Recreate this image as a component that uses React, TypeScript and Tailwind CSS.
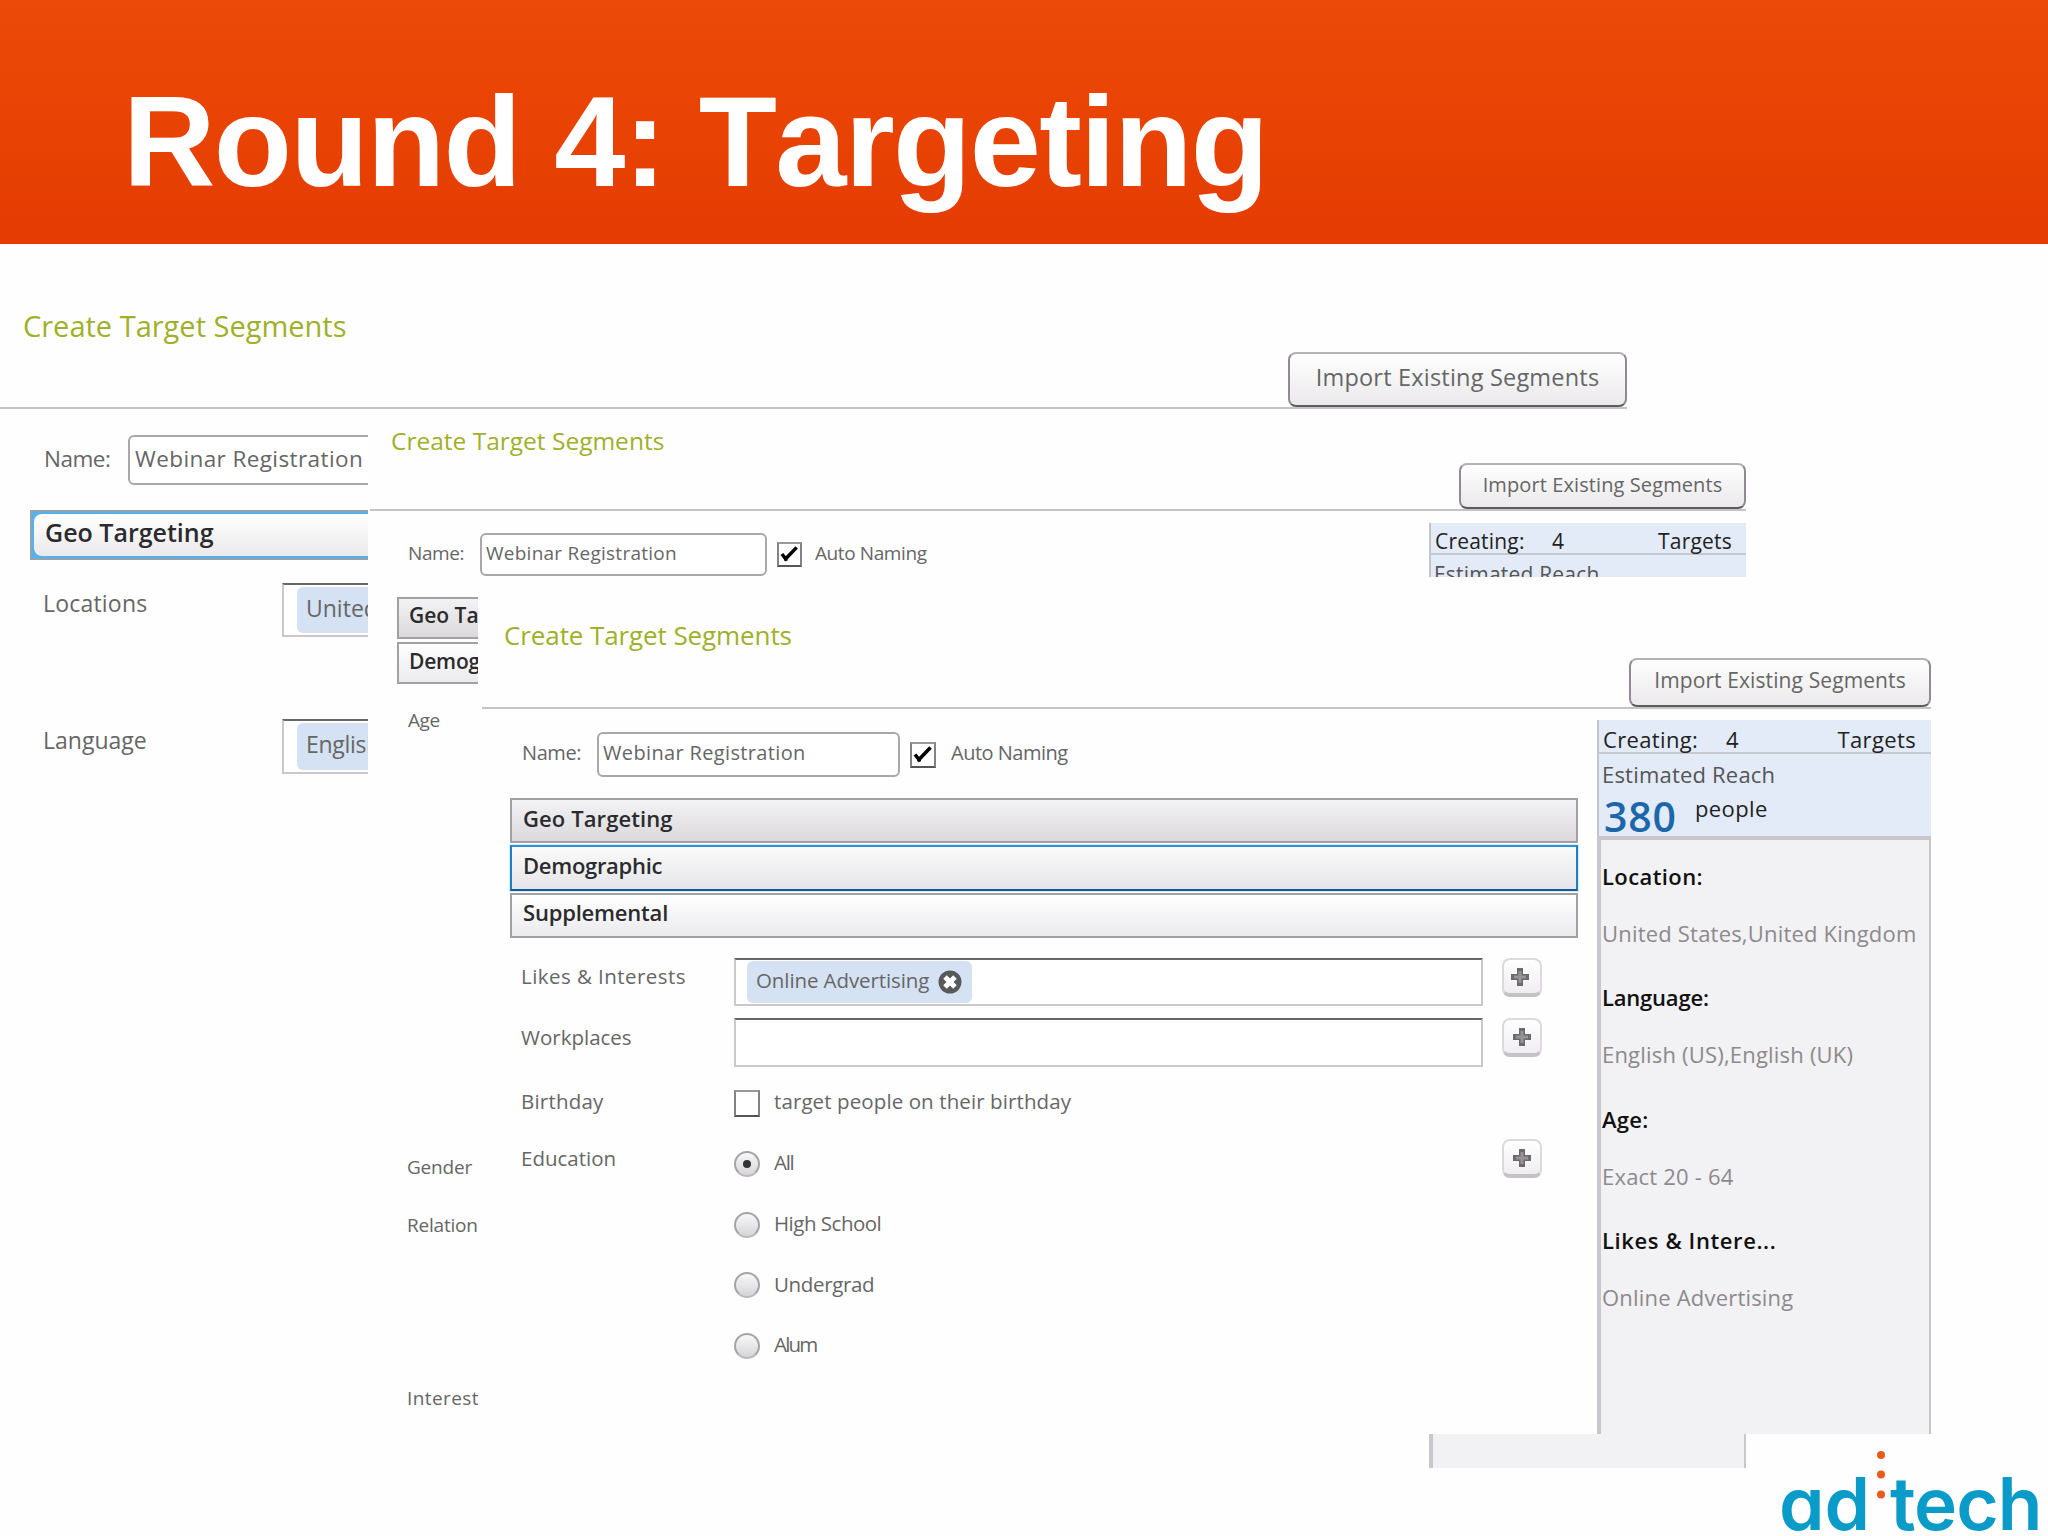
import clsx from "clsx"
import type { ReactNode } from "react"

function ImportButton({ className }: { className?: string }) {
    return (
        <button className={clsx("shrink-0 self-end rounded-lg border-2 border-t-[#b5b1b5] border-x-[#8f8b90] border-b-[#5f5a60] bg-linear-to-b from-white to-[#ebe9eb] leading-none text-[#666]", className)}>
            Import Existing Segments
        </button>
    )
}

function NameInput({ className }: { className?: string }) {
    return (
        <div className={clsx("flex shrink-0 items-center rounded-md border-2 border-[#aaa7ab] bg-white pl-1 leading-none", className)}>
            Webinar Registration
        </div>
    )
}

function Checkbox({ checked, className }: { checked?: boolean; className?: string }) {
    return (
        <span className={clsx("shrink-0 border-2 border-t-[#9a979b] border-x-[#858286] border-b-[#555] bg-white", className)}>
            {checked && (
                <svg viewBox="0 0 22 22" className="h-full w-full" fill="none" stroke="#000" strokeWidth="3.6">
                    <path d="M3 10.5 7 15.5 18.5 3.5" />
                    <path d="M4.5 13h4.5v4.5H5.5z" fill="#000" stroke="none" />
                </svg>
            )}
        </span>
    )
}

function Radio({ checked }: { checked?: boolean }) {
    return (
        <span className="flex size-[26px] shrink-0 items-center justify-center rounded-full border-2 border-[#a5a3a6] border-b-[#bbb9bc] bg-linear-to-b from-[#f8f8f8] to-[#d6d4d8]">
            {checked && <span className="size-2 rounded-full bg-[#333]" />}
        </span>
    )
}

function PlusButton({ className }: { className?: string }) {
    return (
        <button className={clsx("ml-[19px] flex h-[39px] w-10 shrink-0 items-center justify-center rounded-lg border-2 border-b-4 border-[#dcdadd] border-b-[#c4c2c6] bg-linear-to-b from-white to-[#efedf0]", className)}>
            <svg viewBox="0 0 18 18" className="size-[18px]">
                <path d="M6 0h6v6h6v6h-6v6H6v-6H0V6h6z" fill="#6c6a6d" />
                <path d="M7.5 3h3v4.5H15v3h-4.5V15h-3v-4.5H3v-3h4.5z" fill="#969497" />
            </svg>
        </button>
    )
}

function Bar({ children, className }: { children: ReactNode; className?: string }) {
    return (
        <div className={clsx("flex items-center border-2 leading-none font-semibold text-[#2b2b2e]", className)}>
            {children}
        </div>
    )
}

function TokenBox({ children, className }: { children?: ReactNode; className?: string }) {
    return (
        <div className={clsx("shrink-0 border-2 border-[#cac8cc] border-t-[#69656b] bg-white pl-[11px]", className)}>
            {children}
        </div>
    )
}

function GeoPanel() {
    return (
        <section className="absolute top-[244px] left-0 w-[1627px] text-[23px]">
            <header className="flex h-[165px] justify-between border-b-2 border-[#c6c3c7]">
                <h2 className="pt-[67px] pl-[23px] text-[29px] leading-none text-[#9fb02a]">Create Target Segments</h2>
                <ImportButton className="h-[55px] w-[339px] pb-1 text-[23.5px] tracking-[0.2px]" />
            </header>
            <div className="w-[368px] overflow-hidden pt-[26px] text-[#666]">
                <div className="flex h-[50px] items-center text-[22.5px]">
                    <span className="w-[128px] shrink-0 pb-[2px] pl-[44px] leading-none tracking-[-0.5px]">Name:</span>
                    <NameInput className="h-[50px] w-[330px] pb-[2px] pl-[5px] tracking-[0.4px]" />
                </div>
                <Bar className="mt-[25px] ml-[30px] h-[50px] w-[900px] border-[#8fa3b3] bg-[#58b1e8] p-[2px] text-[25px]">
                    <span className="flex h-full w-full items-center rounded-lg bg-linear-to-b from-white to-[#ebe9eb] pb-[5px] pl-[11px]">Geo Targeting</span>
                </Bar>
                <div className="mt-[23px] flex">
                    <span className="w-[282px] shrink-0 pt-[9px] pl-[43px] leading-none tracking-[0.2px]">Locations</span>
                    <TokenBox className="h-[54px] w-[500px]">
                        <span className="mt-[2px] ml-[2px] flex h-[46px] w-[190px] items-center rounded-md bg-[#d5e2f3] pb-1 pl-[9px] leading-none">United States</span>
                    </TokenBox>
                </div>
                <div className="mt-[82px] flex">
                    <span className="w-[282px] shrink-0 pt-[10px] pl-[43px] leading-none">Language</span>
                    <TokenBox className="h-[55px] w-[500px]">
                        <span className="mt-[2px] ml-[2px] flex h-[47px] w-[190px] items-center rounded-md bg-[#d5e2f3] pb-1 pl-[9px] leading-none tracking-[-0.3px]">English (US)</span>
                    </TokenBox>
                </div>
            </div>
        </section>
    )
}

function DemographicPanel() {
    return (
        <section className="absolute top-[411px] left-[368px] flex h-[1057px] w-[1378px] flex-col bg-[#fefefe] text-[19px]">
            <header className="ml-[2px] flex h-[100px] shrink-0 justify-between border-b-2 border-[#c6c3c7]">
                <h2 className="pt-[18px] pl-[21px] text-[24.5px] leading-none text-[#9fb02a]">Create Target Segments</h2>
                <ImportButton className="h-[46px] w-[287px] pb-[3px] text-[20px] tracking-[0.1px]" />
            </header>
            <div className="flex flex-1 justify-between">
                <div className="text-[#666]">
                    <div className="mt-[22px] flex h-[43px] items-center">
                        <span className="w-[112px] pb-[3px] pl-10 leading-none tracking-[-0.4px]">Name:</span>
                        <NameInput className="h-[43px] w-[287px] pb-[3px] tracking-[0.25px]" />
                        <Checkbox checked className="ml-[10px] size-[25px]" />
                        <span className="pb-[3px] pl-[13px] leading-none tracking-[-0.4px]">Auto Naming</span>
                    </div>
                    <div className="mt-[21px] ml-[29px] w-[81px] overflow-hidden text-[21px] whitespace-nowrap">
                        <Bar className="h-[42px] w-[900px] border-[#a3a0a4] bg-linear-to-b from-[#f3f2f4] to-[#dbd9dc] pb-[5px] pl-[10px]">Geo Targeting</Bar>
                        <Bar className="mt-[3px] h-[42px] w-[900px] border-[#a3a0a4] bg-linear-to-b from-white to-[#ebeaed] pb-1 pl-[10px] tracking-[-0.2px]">Demographic</Bar>
                    </div>
                    <p className="mt-[27px] ml-10 leading-none tracking-[-0.4px]">Age</p>
                    <p className="mt-[428px] ml-[39px] leading-none tracking-[-0.2px]">Gender</p>
                    <p className="mt-[39px] ml-[39px] leading-none tracking-[-0.2px]">Relation</p>
                    <p className="mt-[154px] ml-[39px] leading-none tracking-[0.4px]">Interest</p>
                </div>
                <aside className="mt-3 flex w-[317px] flex-col text-[21px] tracking-[0.2px]">
                    <div className="h-[116px] border-l-2 border-[#c5c5cc] bg-[#e2ebf7] leading-none">
                        <div className="flex h-8 border-b-2 border-[#c5c8d0] pt-2 pr-[14px] pl-1 text-[#222]">
                            <span className="w-[117px]">Creating:</span>
                            <span>4</span>
                            <span className="ml-auto">Targets</span>
                        </div>
                        <p className="pt-[9px] pl-[3px] text-[#555]">Estimated Reach</p>
                    </div>
                    <div className="flex-1 border-r-2 border-l-4 border-[#c9c7cb] bg-[#f2f1f3]" />
                </aside>
            </div>
        </section>
    )
}

const levels = [
    { name: "All", style: "tracking-[-1.3px]" },
    { name: "High School", style: "tracking-[-0.5px]" },
    { name: "Undergrad", style: "tracking-[-0.35px]" },
    { name: "Alum", style: "tracking-[-1.8px]" },
]

const summary = [
    { title: "Location:", value: "United States,United Kingdom", style: "tracking-[0.4px]" },
    { title: "Language:", value: "English (US),English (UK)", style: "tracking-[-0.2px]" },
    { title: "Age:", value: "Exact 20 - 64", style: "tracking-[0.3px]" },
    { title: "Likes & Intere...", value: "Online Advertising", style: "tracking-[0.6px]" },
]

function SupplementalPanel() {
    return (
        <section className="absolute top-[577px] left-[478px] flex h-[857px] w-[1453px] flex-col bg-[#fefefe] text-[20.5px]">
            <header className="ml-1 flex h-[132px] shrink-0 justify-between border-b-2 border-[#c6c3c7]">
                <h2 className="pt-[45px] pl-[22px] text-[26px] leading-none tracking-[-0.1px] text-[#9fb02a]">Create Target Segments</h2>
                <ImportButton className="h-[49px] w-[302px] pb-1 text-[21px] tracking-[0.1px]" />
            </header>
            <div className="flex flex-1 justify-between">
                <div className="text-[#666]">
                    <div className="mt-[23px] flex h-[45px] items-center text-[20px]">
                        <span className="w-[119px] pb-1 pl-[44px] leading-none tracking-[-0.4px]">Name:</span>
                        <NameInput className="h-[45px] w-[303px] pb-1 tracking-[0.35px]" />
                        <Checkbox checked className="ml-[10px] size-[26px]" />
                        <span className="pb-1 pl-[15px] leading-none tracking-[-0.5px]">Auto Naming</span>
                    </div>
                    <div className="mt-[21px] ml-8 w-[1068px] text-[22px]">
                        <Bar className="h-[45px] border-[#a3a0a4] bg-linear-to-b from-[#f3f2f4] to-[#dbd9dc] pb-[5px] pl-[11px] tracking-[0.1px]">Geo Targeting</Bar>
                        <Bar className="mt-[2px] h-[46px] border-t-[#2b93d6] border-x-[#1f7fc4] border-b-[#155a9c] bg-linear-to-b from-[#fafafa] to-[#e6e6ea] pb-[7px] pl-[11px] tracking-[-0.3px] outline-1 outline-[#d3eefb]">Demographic</Bar>
                        <Bar className="mt-[2px] h-[45px] border-[#a3a0a4] bg-linear-to-b from-white to-[#ebeaed] pb-[7px] pl-[11px] tracking-[-0.2px]">Supplemental</Bar>
                    </div>
                    <div className="mt-5 ml-[43px] flex leading-none">
                        <span className="w-[213px] pt-2 tracking-[0.45px]">Likes &amp; Interests</span>
                        <TokenBox className="h-12 w-[749px]">
                            <span className="mt-px flex h-[42px] w-[225px] items-center rounded-md bg-[#d5e2f3] pl-[9px]">
                                <span className="pb-1 tracking-[-0.1px]">Online Advertising</span>
                                <svg viewBox="0 0 24 24" className="ml-[9px] size-6">
                                    <circle cx="12" cy="12" r="11.5" fill="#58595b" />
                                    <path d="M7 7l10 10M17 7L7 17" stroke="#fff" strokeWidth="5" />
                                </svg>
                            </span>
                        </TokenBox>
                        <PlusButton className="pr-1" />
                    </div>
                    <div className="mt-3 ml-[43px] flex leading-none">
                        <span className="w-[213px] pt-[9px]">Workplaces</span>
                        <TokenBox className="h-[49px] w-[749px]" />
                        <PlusButton />
                    </div>
                    <div className="mt-[23px] ml-[43px] flex h-[27px] leading-none">
                        <span className="w-[213px] pt-px tracking-[0.2px]">Birthday</span>
                        <Checkbox className="h-[27px] w-[26px]" />
                        <span className="pt-px pl-[14px] tracking-[0.1px]">target people on their birthday</span>
                    </div>
                    <div className="mt-[22px] ml-[43px] flex leading-none">
                        <span className="w-[213px] pt-[9px]">Education</span>
                        <div className="flex w-[749px] flex-col gap-[34.7px] pt-3">
                            {levels.map((level, i) => (
                                <label key={level.name} className="flex h-[26px] items-center">
                                    <Radio checked={i === 0} />
                                    <span className={clsx("pb-[3px] pl-[14px]", level.style)}>{level.name}</span>
                                </label>
                            ))}
                        </div>
                        <PlusButton />
                    </div>
                </div>
                <aside className="mt-[11px] flex w-[334px] flex-col text-[22px] leading-none tracking-[0.2px]">
                    <div className="h-[116px] border-l-2 border-[#c5c5cc] bg-[#e2ebf7]">
                        <div className="flex h-[34px] border-b-2 border-[#c5c8d0] pt-2 pr-[15px] pl-1 tracking-[0.35px] text-[#222]">
                            <span className="w-[123px]">Creating:</span>
                            <span>4</span>
                            <span className="ml-auto">Targets</span>
                        </div>
                        <p className="pt-[9px] pl-[3px] text-[#555]">Estimated Reach</p>
                        <p className="flex pt-[11px] pl-[5px]">
                            <span className="w-[91px] text-[41px] font-semibold tracking-[0.8px] text-[#1c67a9]">380</span>
                            <span className="pt-px tracking-[0.4px] text-[#222]">people</span>
                        </p>
                    </div>
                    <dl className="flex-1 border-t-4 border-r-2 border-l-4 border-[#c9c7cb] bg-[#f2f1f3] pt-[25px] pl-px">
                        {summary.map((item) => (
                            <div key={item.title} className="h-[121.3px]">
                                <dt className={clsx("font-semibold text-[#111]", item.style)}>{item.title}</dt>
                                <dd className="pt-[35px] whitespace-nowrap text-[#8c8a8d]">{item.value}</dd>
                            </div>
                        ))}
                    </dl>
                </aside>
            </div>
        </section>
    )
}

function Logo() {
    return (
        <div className="absolute top-[1451px] left-[1779px] flex font-['Inter',sans-serif] text-[73px] leading-none font-semibold text-[#0a9bc9] [font-feature-settings:'cv11']">
            <span className="w-[98px] pt-4">ad</span>
            <svg viewBox="0 0 8 48" className="h-12 w-2">
                <circle cx="4" cy="4" r="4" fill="#ea5b1b" />
                <circle cx="4" cy="23.5" r="4" fill="#ea5b1b" />
                <circle cx="4" cy="43.5" r="4" fill="#ea5b1b" />
            </svg>
            <span className="pt-4 pl-[5px] tracking-[-1px]">tech</span>
        </div>
    )
}

export default function App() {
    return (
        <main className="relative h-[1536px] w-[2048px] overflow-hidden bg-[#fefefe] font-['Open_Sans',sans-serif]">
            <header className="h-[244px] bg-linear-to-b from-[#eb4a08] via-[#e94304] to-[#e43b03] pt-[78px] pl-[123px]">
                <h1 className="font-['Liberation_Sans',sans-serif] text-[128px] leading-none font-bold tracking-[-1.6px] text-white [font-kerning:none]">Round 4: Targeting</h1>
            </header>
            <GeoPanel />
            <DemographicPanel />
            <SupplementalPanel />
            <Logo />
        </main>
    )
}
